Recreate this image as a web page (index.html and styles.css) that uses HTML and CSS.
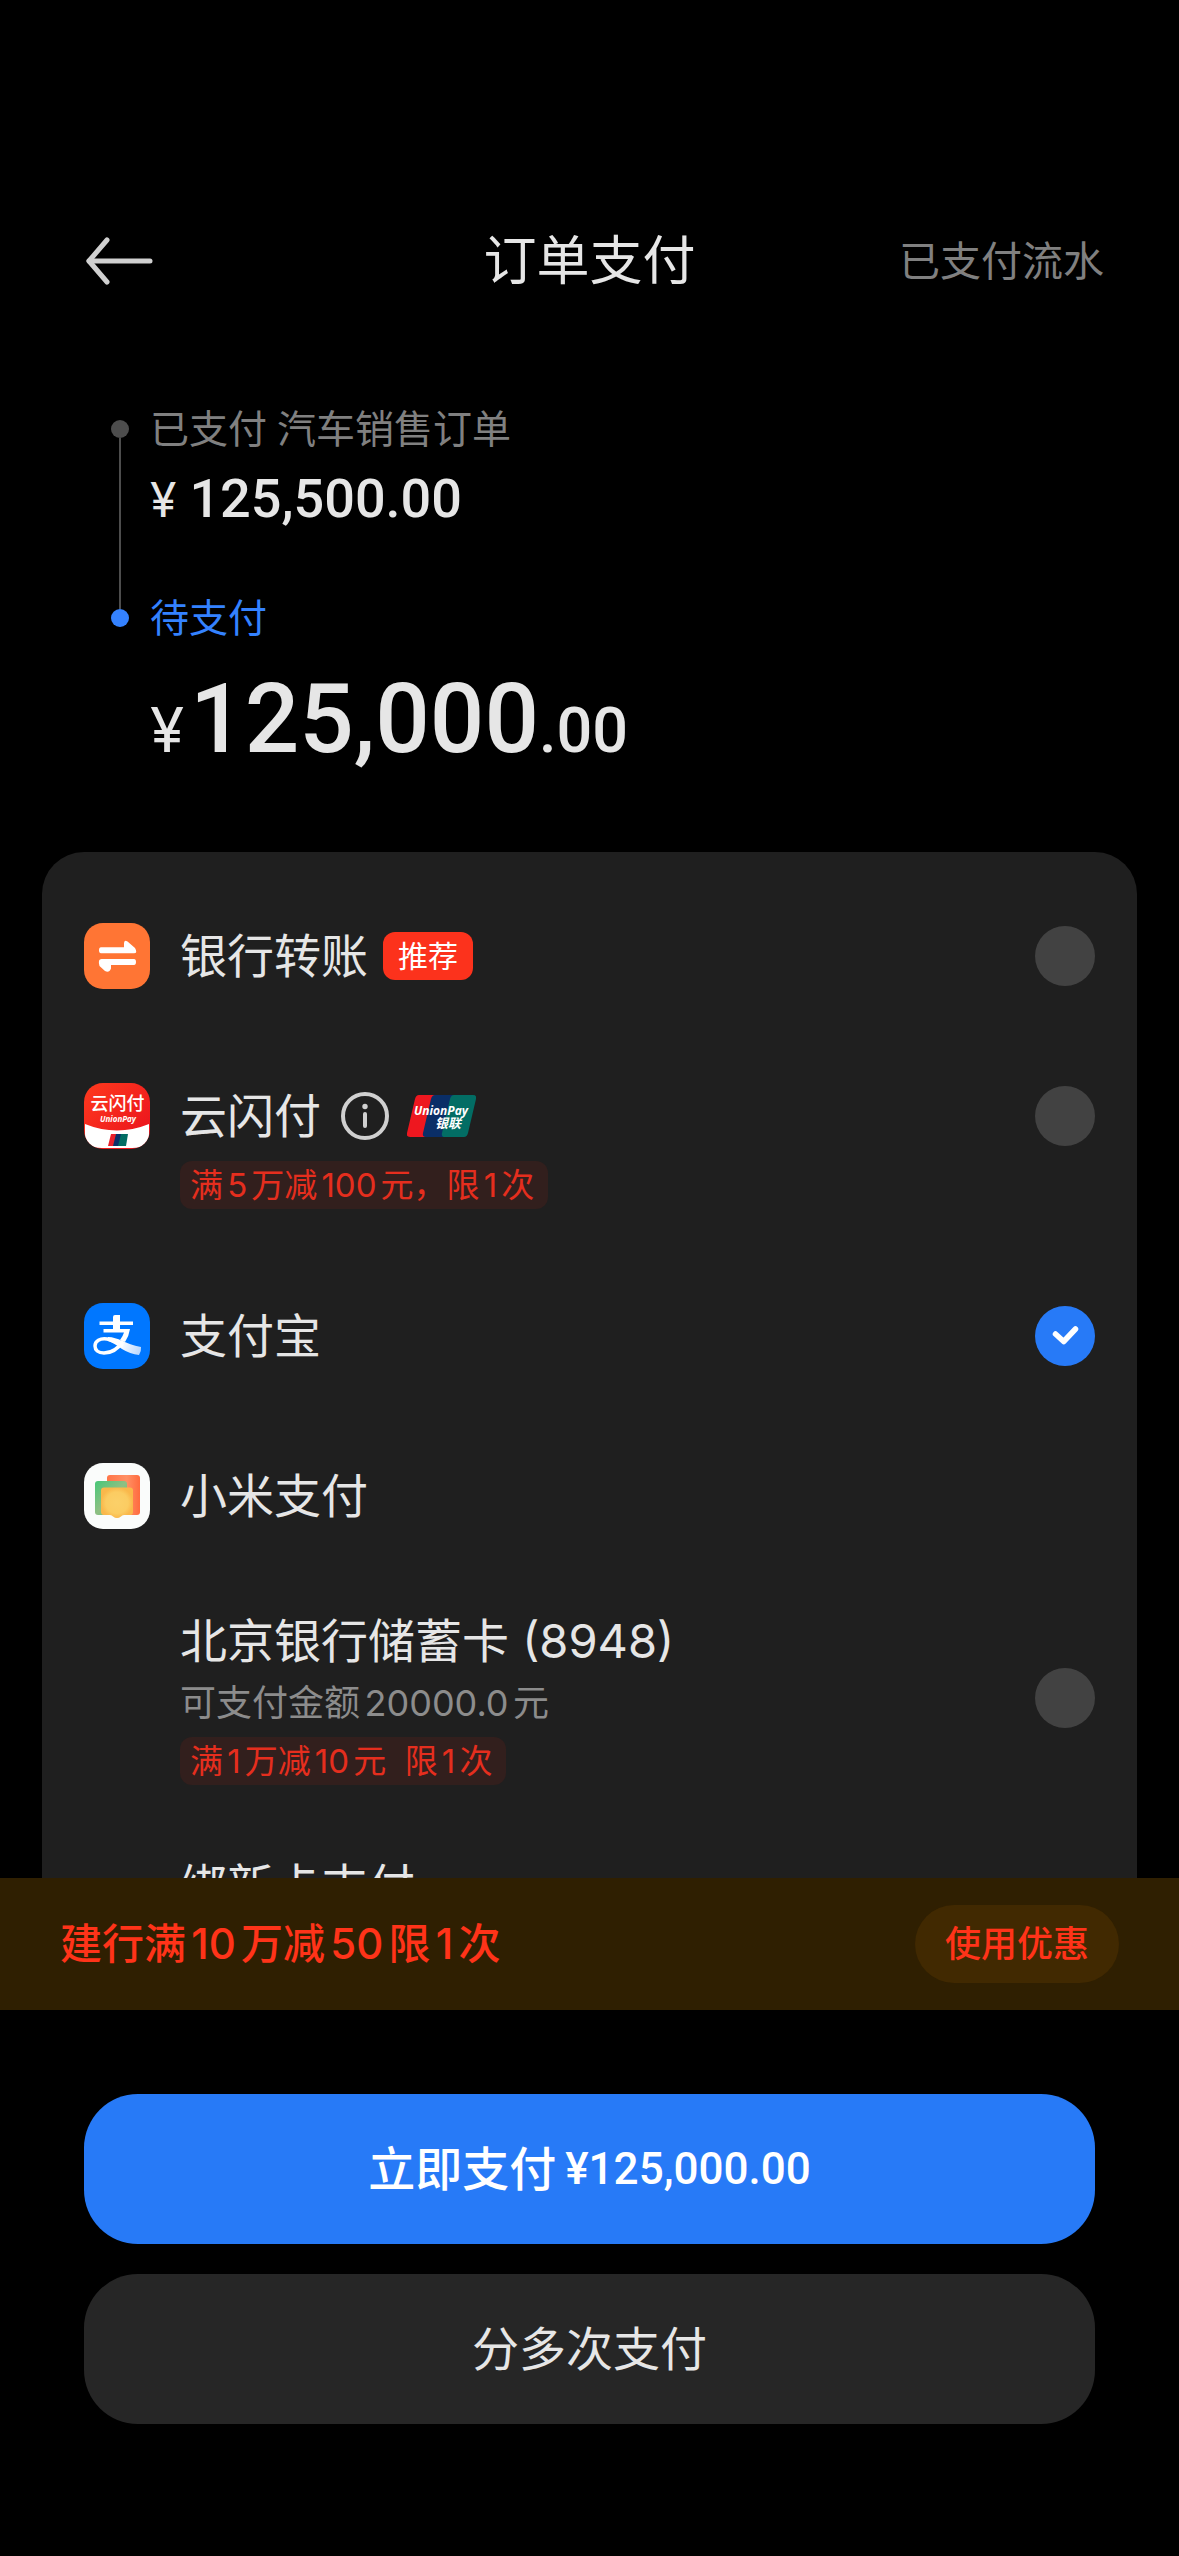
FILE: index.html
```html
<!DOCTYPE html>
<html lang="zh-CN">
<head>
  <meta charset="utf-8">
  <meta name="viewport" content="width=device-width, initial-scale=1">
  <title>订单支付</title>
  <link rel="stylesheet" href="styles.css">
</head>
<body>
<div class="page">
  <header class="topbar">
    <button class="back" type="button" aria-label="返回">
      <svg width="72" height="54" viewBox="0 0 72 54" fill="none" stroke="#d0d0d0" stroke-width="5" stroke-linecap="round" stroke-linejoin="round"><path d="M23 6 5 27l18 21"/><path d="M5 27h61"/></svg>
    </button>
    <h1 class="title">订单支付</h1>
    <a class="history" href="#history">已支付流水</a>
  </header>

  <ol class="timeline">
    <li class="step">
      <span class="rail"><span class="dot"></span><span class="line"></span></span>
      <div class="step-body">
        <p class="step-label"><span>已支付</span><span>汽车销售订单</span></p>
        <p class="amount"><span class="yen">¥</span><span>125,500.00</span></p>
      </div>
    </li>
    <li class="step current">
      <span class="rail"><span class="dot"></span></span>
      <div class="step-body">
        <p class="step-label">待支付</p>
        <p class="amount amount-large"><span class="yen">¥</span><span>125,000<span class="cents">.00</span></span></p>
      </div>
    </li>
  </ol>

  <main class="methods">
    <form class="card" id="pay">
      <label class="row">
        <svg class="icon" viewBox="0 0 66 66"><rect width="66" height="66" rx="19" fill="#ff7534"/><path fill="#fff" d="M17 24.300h23v-4q0-4 3.500-1.800l7.500 6.500q3 5.300-1 5.300H17q-2 0-2-3t2-3zM50 42H27v3.500q-2 5-6 2.500l-5.500-5q-2-7 2-7H50q2 0 2 3t-2 3z"/></svg>
        <span class="head"><span class="name">银行转账</span><span class="badge">推荐</span></span>
        <input class="radio" type="radio" name="method">
      </label>

      <label class="row">
        <svg class="icon" viewBox="0 0 66 66">
          <defs>
            <clipPath id="tile"><rect width="66" height="66" rx="19"/></clipPath>
            <linearGradient id="red" x1="0" y1="0" x2="1" y2="1"><stop offset="0" stop-color="#ff3a1e"/><stop offset="1" stop-color="#e80f1d"/></linearGradient>
          </defs>
          <g clip-path="url(#tile)">
            <rect width="66" height="66" fill="url(#red)"/>
            <path fill="#fff" d="M1 41q32 13 64 0v10q0 14-17 14H18Q1 65 1 51z"/>
            <path fill="#e9202b" d="M27 51h6l-2 12h-7z"/><path fill="#0b2f68" d="M32 51h6l-2 12h-7z"/><path fill="#026d64" d="M37 51h7l-2 12h-8z"/>
          </g>
          <text x="33.500" y="27" text-anchor="middle" class="logo-han">云闪付</text>
          <text x="34" y="39" text-anchor="middle" class="logo-latin">UnionPay</text>
        </svg>
        <span class="head">
          <span class="name">云闪付</span>
          <svg class="info" viewBox="0 0 48 48" role="img" aria-label="说明"><circle cx="24" cy="24" r="22" fill="none" stroke="#d0d0d0" stroke-width="4"/><circle cx="24" cy="14.500" r="2.700" fill="#d0d0d0"/><path d="M24 22v12" stroke="#d0d0d0" stroke-width="4" stroke-linecap="round"/></svg>
          <svg class="unionpay" viewBox="0 0 69 42">
            <path fill="#ee171f" d="M12 0h17l-9 42H3q-4 0-3-4L8 4q1-4 4-4z"/>
            <path fill="#0a2e67" d="M28 0h20l-9 42H19q-4 0-3-4l8-34q1-4 4-4z"/>
            <path fill="#026d64" d="M47 0h19q4 0 3 4l-8 34q-1 4-4 4H38q-4 0-3-4l8-34q1-4 4-4z"/>
            <text x="34" y="20" text-anchor="middle" class="up-latin">UnionPay</text>
            <text x="41" y="33" text-anchor="middle" class="up-han">银联</text>
          </svg>
        </span>
        <input class="radio" type="radio" name="method">
        <span class="offer">满5万减100元，限1次</span>
      </label>

      <label class="row">
        <svg class="icon" viewBox="0 0 66 66">
          <defs><linearGradient id="tail" gradientUnits="userSpaceOnUse" x1="36" y1="42" x2="57" y2="50"><stop offset="0" stop-color="#fff"/><stop offset="1" stop-color="#b5d5ff"/></linearGradient></defs>
          <rect width="66" height="66" rx="19" fill="#07f"/>
          <path fill="#fff" d="M15.500 18.500H29v-4.500q0-2 2-2h5v6.500h13v3.500H36v4h10q-1 7-5 13l-5-2q3-4 4-7.500H19.500V26H29v-4H15.500z"/>
          <path fill="url(#tail)" d="M24 34c10 0 17 7 33 10q.500 4-2 8-9-1-17-6-8-6-14-8z"/>
          <path d="M39 38C34 46 28 50 20 50c-6 0-9-3-9-7 0-5 5-8 12-7 6 1 11 4 16 7" fill="none" stroke="#fff" stroke-width="3.500"/>
        </svg>
        <span class="head"><span class="name">支付宝</span></span>
        <input class="radio" type="radio" name="method" checked>
      </label>

      <div class="row">
        <svg class="icon" viewBox="0 0 66 66">
          <defs>
            <linearGradient id="or" x1="0" x2="1" y1="0" y2="0"><stop offset="0" stop-color="#ff7548"/><stop offset=".6" stop-color="#ff9064"/><stop offset="1" stop-color="#ff6a3e"/></linearGradient>
            <linearGradient id="gr" x1="0" x2="1" y1="0" y2="1"><stop offset="0" stop-color="#46c878"/><stop offset=".5" stop-color="#8fbf83"/><stop offset="1" stop-color="#46c878"/></linearGradient>
            <radialGradient id="ye"><stop offset="0" stop-color="#fbd069"/><stop offset=".7" stop-color="#fbcc62"/><stop offset="1" stop-color="#fab84b"/></radialGradient>
          </defs>
          <rect width="66" height="66" rx="19" fill="#fafcfb"/>
          <rect x="23" y="12" width="33" height="40" rx="3" fill="url(#or)"/>
          <rect x="11" y="18" width="32" height="34" rx="3" fill="url(#gr)"/>
          <path fill="url(#ye)" d="M20 24.500h26q3 0 3 3V49q0 3-3 3h-6q-2 0-3 1.500-4 3-8 0-1-1.500-3-1.500h-6q-3 0-3-3V27.500q0-3 3-3z"/>
        </svg>
        <span class="head"><span class="name">小米支付</span></span>
      </div>

      <label class="row-card">
        <span class="card-body">
          <span class="card-name">北京银行储蓄卡 (8948)</span>
          <span class="card-limit">可支付金额20000.0元</span>
          <span class="offer">满1万减10元&nbsp; 限1次</span>
        </span>
        <input class="radio" type="radio" name="method">
      </label>

      <a class="row-card" href="#bind"><span class="card-name">绑新卡支付</span></a>
    </form>
  </main>

  <footer>
    <div class="promo">
      <p class="promo-text">建行满10万减50限1次</p>
      <button class="promo-button" type="button">使用优惠</button>
    </div>
    <div class="actions">
      <button class="action primary" type="submit" form="pay"><span>立即支付</span><span class="price">¥125,000.00</span></button>
      <button class="action" type="button">分多次支付</button>
    </div>
  </footer>
</div>
</body>
</html>
```
FILE: styles.css
```css
* {
  box-sizing: border-box;
  margin: 0;
  padding: 0;
}

body {
  background: #000;
  color: #e6e6e6;
  font-family: Inter, "Noto Sans CJK SC", sans-serif;
  text-autospace: normal;
}

button {
  border: 0;
  background: none;
  color: inherit;
  font: inherit;
  cursor: pointer;
}

a {
  color: inherit;
  text-decoration: none;
}

svg {
  display: block;
}

.page {
  display: flex;
  flex-direction: column;
  height: 100vh;
}

/* Top bar */
.topbar {
  display: grid;
  grid-template-columns: 1fr auto 1fr;
  align-items: center;
  height: 114px;
  margin-top: 204px;
  padding: 0 75px;
}

.back {
  justify-self: start;
  padding-left: 9px;
}

.title {
  font-size: 53px;
  font-weight: 400;
  line-height: 72px;
}

.history {
  justify-self: end;
  color: #808080;
  font-size: 41px;
  line-height: 60px;
}

/* Payment progress */
.timeline {
  padding: 87px 75px 66px 111px;
  list-style: none;
}

.step {
  display: flex;
  gap: 21px;
}

.step:first-child {
  height: 189px;
}

.rail {
  display: flex;
  flex-direction: column;
  align-items: center;
  padding-top: 15px;
}

.dot {
  width: 18px;
  height: 18px;
  border-radius: 50%;
  background: #4d4d4d;
}

.line {
  flex: 1;
  width: 2px;
  margin-bottom: -15px;
  background: #4d4d4d;
}

.step-label {
  display: flex;
  gap: 10px;
  color: #808080;
  font-size: 39px;
  line-height: 48px;
}

.current .dot {
  background: #3482ff;
}

.current .step-label {
  color: #3482ff;
}

.amount {
  display: flex;
  align-items: baseline;
  gap: 13px;
  margin-top: 16px;
  font-family: Roboto, sans-serif;
  font-size: 54px;
  font-weight: 500;
  line-height: 60px;
}

.yen {
  font-family: Inter, sans-serif;
  font-size: 48px;
  font-weight: 400;
}

.amount-large {
  gap: 6px;
  margin-top: 22px;
  font-size: 96px;
  line-height: 110px;
}

.amount-large .yen {
  font-size: 62px;
}

.cents {
  font-size: 63px;
}

/* Payment methods */
.methods {
  flex: 1;
  min-height: 0;
  padding: 0 42px;
  overflow: auto;
  scrollbar-width: none;
}

.card {
  padding: 24px 42px;
  border-radius: 42px;
  background: #1f1f1f;
}

.row {
  display: grid;
  grid-template-columns: 66px 1fr 60px;
  align-items: center;
  gap: 12px 30px;
  padding: 47px 0;
}

.icon {
  width: 66px;
  height: 66px;
}

.head {
  display: flex;
  align-items: center;
}

.name,
.card-name {
  font-size: 47px;
  line-height: 60px;
}

.badge {
  margin-left: 15px;
  padding: 0 15px;
  border-radius: 12px;
  background: #fc321c;
  color: #fff;
  font-size: 30px;
  line-height: 48px;
}

.info {
  width: 48px;
  height: 48px;
  margin-left: 20px;
}

.unionpay {
  width: 69px;
  height: 42px;
  margin-left: 18px;
}

.radio {
  width: 60px;
  height: 60px;
  border-radius: 50%;
  background: #424242;
  appearance: none;
}

.radio:checked {
  background: #277af7 url("data:image/svg+xml,%3Csvg xmlns='http://www.w3.org/2000/svg' viewBox='0 0 60 60' fill='none' stroke='white' stroke-width='5.500' stroke-linecap='round' stroke-linejoin='round'%3E%3Cpath d='M20.500 28l8.200 7.500L40.500 23'/%3E%3C/svg%3E");
}

.offer {
  justify-self: start;
  padding: 0 14px 0 10px;
  border-radius: 12px;
  background: #321f1d;
  color: #e52e1e;
  font-size: 33px;
  line-height: 48px;
}

.row > .offer {
  grid-column: 2;
}

.row-card {
  display: flex;
  align-items: center;
  justify-content: space-between;
  padding: 35px 0 36px 96px;
}

.card-body {
  display: flex;
  flex-direction: column;
  align-items: flex-start;
}

.card-limit {
  margin: 8px 0 10px;
  color: #8c8c8c;
  font-size: 36px;
  line-height: 48px;
}

/* Lettering inside the brand marks */
.logo-han {
  fill: #fff;
  font-size: 18px;
  font-weight: 500;
}

.logo-latin {
  fill: #fff;
  font: italic 700 8px "Open Sans", sans-serif;
}

.up-latin {
  fill: #fff;
  font: italic 700 12px "Open Sans", sans-serif;
}

.up-han {
  fill: #fff;
  font-size: 13px;
  font-style: italic;
  font-weight: 700;
}

/* Promotion strip and actions */
.promo {
  display: flex;
  align-items: center;
  justify-content: space-between;
  height: 132px;
  padding: 0 60px;
  background: #2f1f01;
  color: #ff3319;
  font-weight: 500;
}

.promo-text {
  font-size: 42px;
  line-height: 60px;
}

.promo-button {
  padding: 0 30px;
  border-radius: 39px;
  background: #412901;
  font-size: 36px;
  line-height: 78px;
}

.actions {
  display: flex;
  flex-direction: column;
  gap: 30px;
  padding: 84px 84px 132px;
}

.action {
  display: flex;
  align-items: center;
  justify-content: center;
  gap: 9px;
  height: 150px;
  border-radius: 54px;
  background: #262626;
  font-size: 47px;
  line-height: 60px;
}

.primary {
  background: #277af7;
  color: #fff;
  font-weight: 500;
}

.price {
  font-family: Roboto, sans-serif;
  font-size: 44px;
}
```
